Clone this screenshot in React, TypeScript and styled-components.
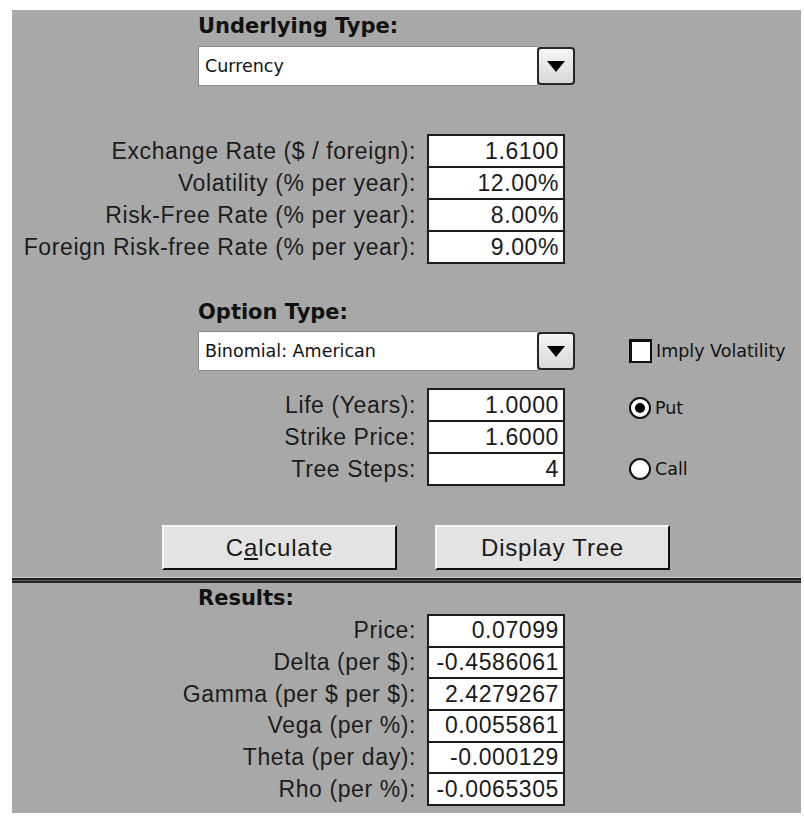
import React from 'react';
import styled, { createGlobalStyle } from 'styled-components';

const GlobalStyle = createGlobalStyle`
  html, body {
    margin: 0;
    padding: 0;
    background: #ffffff;
  }
  body {
    font-family: "Liberation Sans", Arial, sans-serif;
  }
`;

const Page = styled.div`
  padding: 10px 0 0 12px;
`;

const Panel = styled.div`
  width: 789px;
  background: #a8a8a8;
  padding: 4px 0 7px;
  display: flex;
  flex-direction: column;
  color: #1a1a1a;
`;

const Heading = styled.div<{ $gap?: number }>`
  margin: ${p => p.$gap ?? 0}px 0 0 186px;
  font-family: "DejaVu Sans", Verdana, sans-serif;
  font-weight: bold;
  font-size: 21px;
  line-height: 24px;
  color: #111;
`;

const SelectRow = styled.div<{ $gap: number }>`
  display: flex;
  align-items: center;
  margin: ${p => p.$gap}px 0 0 186px;
`;

const Select = styled.div`
  display: flex;
  align-items: center;
  width: 377px;
  height: 40px;
`;

const SelectField = styled.div`
  flex: 1;
  height: 100%;
  box-sizing: border-box;
  background: #ffffff;
  border: 1px solid #8a8a8a;
  border-right: none;
  padding-left: 6px;
  display: flex;
  align-items: center;
  font-family: "DejaVu Sans", Tahoma, sans-serif;
  font-size: 17.5px;
  color: #111;
`;

const SelectButton = styled.div`
  width: 38px;
  height: 38px;
  box-sizing: border-box;
  border: 2px solid #262626;
  border-radius: 4px;
  background: linear-gradient(#f6f6f6, #d8d8d8);
  display: flex;
  align-items: center;
  justify-content: center;
`;

const Stack = styled.div<{ $gap: number }>`
  display: flex;
  flex-direction: column;
  margin-top: ${p => p.$gap}px;
`;

const FieldRow = styled.div<{ $pitch: number }>`
  display: grid;
  grid-template-columns: 403px 138px auto;
  column-gap: 12px;
  align-items: center;
  height: ${p => p.$pitch + 2}px;

  & + & {
    margin-top: -2px;
  }
`;

const Label = styled.div`
  text-align: right;
  white-space: nowrap;
  font-size: 23px;
  letter-spacing: 0.6px;
  margin-right: -1px;
  color: #1c1c1c;
`;

const Cell = styled.div`
  height: 100%;
  box-sizing: border-box;
  border: 2px solid #1c1c1c;
  background: #ffffff;
  display: flex;
  align-items: center;
  justify-content: flex-end;
  padding-right: 4px;
  font-size: 23px;
  letter-spacing: 0.6px;
  color: #1a1a1a;
`;

const Side = styled.div<{ $nudge?: number }>`
  display: flex;
  align-items: center;
  padding-left: 52px;
  padding-top: ${p => p.$nudge ?? 0}px;
`;

const Choice = styled.div<{ $gap?: number }>`
  display: flex;
  align-items: center;
  margin-left: ${p => p.$gap ?? 0}px;
`;

const CheckBox = styled.span`
  width: 23px;
  height: 24px;
  box-sizing: border-box;
  background: #ffffff;
  border: 2px solid #111;
  border-top-width: 3px;
  border-left-width: 3px;
`;

const Radio = styled.span<{ $on?: boolean }>`
  width: 22px;
  height: 22px;
  box-sizing: border-box;
  border-radius: 50%;
  border: 2px solid #111;
  background: #ffffff;
  display: flex;
  align-items: center;
  justify-content: center;

  &::after {
    content: '';
    width: 10px;
    height: 10px;
    border-radius: 50%;
    background: ${p => (p.$on ? '#000000' : 'transparent')};
  }
`;

const ChoiceText = styled.span`
  margin-left: 4px;
  font-family: "DejaVu Sans", Tahoma, sans-serif;
  font-size: 17.5px;
  color: #111;
`;

const ButtonRow = styled.div`
  display: flex;
  gap: 38px;
  margin: 39px 0 0 150px;
`;

const Button = styled.div`
  width: 235px;
  height: 45px;
  box-sizing: border-box;
  background: #e3e3e3;
  border-top: 2px solid #f7f7f7;
  border-left: 2px solid #f7f7f7;
  border-right: 2px solid #111;
  border-bottom: 2px solid #111;
  display: flex;
  align-items: center;
  justify-content: center;
  font-size: 24px;
  letter-spacing: 0.8px;
  color: #1a1a1a;
`;

const Divider = styled.div`
  margin-top: 8px;
  height: 1px;
  background: #5c5c5c;
  border-top: 2px solid #1e1e1e;
  border-bottom: 2px solid #262626;
  box-shadow: 0 -1px 0 #c9c9c9;
`;

const Arrow = () => (
  <svg width="18" height="11" viewBox="0 0 18 11">
    <polygon points="0,0 18,0 9,11" fill="#000" />
  </svg>
);

const Dropdown = ({ value }: { value: string }) => (
  <Select>
    <SelectField>{value}</SelectField>
    <SelectButton>
      <Arrow />
    </SelectButton>
  </Select>
);

const marketFields = [
  ['Exchange Rate ($ / foreign):', '1.6100'],
  ['Volatility (% per year):', '12.00%'],
  ['Risk-Free Rate (% per year):', '8.00%'],
  ['Foreign Risk-free Rate (% per year):', '9.00%'],
];

const results = [
  ['Price:', '0.07099'],
  ['Delta (per $):', '-0.4586061'],
  ['Gamma (per $ per $):', '2.4279267'],
  ['Vega (per %):', '0.0055861'],
  ['Theta (per day):', '-0.000129'],
  ['Rho (per %):', '-0.0065305'],
];

export default function App() {
  return (
    <Page>
      <GlobalStyle />
      <Panel>
        <Heading>Underlying Type:</Heading>
        <SelectRow $gap={8}>
          <Dropdown value="Currency" />
        </SelectRow>

        <Stack $gap={48}>
          {marketFields.map(([label, value]) => (
            <FieldRow key={label} $pitch={32}>
              <Label>{label}</Label>
              <Cell>{value}</Cell>
            </FieldRow>
          ))}
        </Stack>

        <Heading $gap={36}>Option Type:</Heading>
        <SelectRow $gap={7}>
          <Dropdown value="Binomial: American" />
          <Choice $gap={54}>
            <CheckBox />
            <ChoiceText>Imply Volatility</ChoiceText>
          </Choice>
        </SelectRow>

        <Stack $gap={17}>
          <FieldRow $pitch={32}>
            <Label>Life (Years):</Label>
            <Cell>1.0000</Cell>
            <Side $nudge={6}>
              <Choice>
                <Radio $on />
                <ChoiceText>Put</ChoiceText>
              </Choice>
            </Side>
          </FieldRow>
          <FieldRow $pitch={32}>
            <Label>Strike Price:</Label>
            <Cell>1.6000</Cell>
          </FieldRow>
          <FieldRow $pitch={32}>
            <Label>Tree Steps:</Label>
            <Cell>4</Cell>
            <Side>
              <Choice>
                <Radio />
                <ChoiceText>Call</ChoiceText>
              </Choice>
            </Side>
          </FieldRow>
        </Stack>

        <ButtonRow>
          <Button>
            C<u>a</u>lculate
          </Button>
          <Button>Display Tree</Button>
        </ButtonRow>

        <Divider />

        <Heading $gap={3}>Results:</Heading>
        <Stack $gap={4}>
          {results.map(([label, value]) => (
            <FieldRow key={label} $pitch={31.67}>
              <Label>{label}</Label>
              <Cell>{value}</Cell>
            </FieldRow>
          ))}
        </Stack>
      </Panel>
    </Page>
  );
}
